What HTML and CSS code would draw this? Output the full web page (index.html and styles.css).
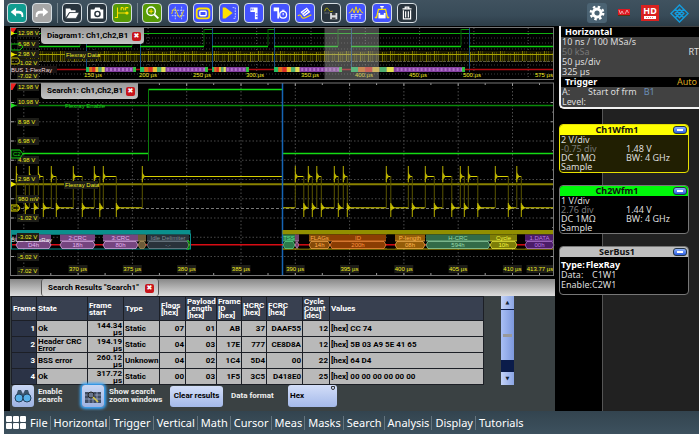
FILE: index.html
```html
<!DOCTYPE html>
<html lang="en">
<head>
<meta charset="utf-8">
<title>Oscilloscope</title>
<link rel="stylesheet" href="styles.css">
</head>
<body>
<div class="scope">
  <header class="toolbar">
    <div class="group">
      <button class="tool teal" aria-label="Undo"><svg viewBox="0 0 20 20"><path d="M9 4L3 9l6 5v-3.500h3q3 0 3 3v1h2v-2q0-5-5-5H9z" fill="#fff"/></svg></button>
      <button class="tool gray" aria-label="Redo"><svg viewBox="0 0 20 20"><path d="M11 4l6 5-6 5v-3.500H8q-3 0-3 3v1H3v-2q0-5 5-5h3z" fill="#fff"/></svg></button>
    </div>
    <span class="sep"></span>
    <div class="group">
      <button class="tool dark" aria-label="Open"><svg viewBox="0 0 20 20"><path d="M3 15V5h5l1 2h5v2H7z" fill="#fff"/><path d="M7.500 9.500H18L14.500 16H3.500z" fill="#fff" stroke="#29343d" stroke-width=".7"/></svg></button>
      <button class="tool dark" aria-label="Screenshot"><svg viewBox="0 0 20 20"><path d="M3 6h4l1-2h5l1 2h3v10H3z" fill="#fff"/><circle cx="10.500" cy="11" r="3.600" fill="#29343d"/><circle cx="10.500" cy="11" r="2" fill="#fff"/></svg></button>
      <button class="tool green" aria-label="Measure pulse"><svg viewBox="0 0 20 20" fill="none" stroke="#ffe000" stroke-width="1.200"><path d="M2 15h3V4M5 10h11M9 4v3M9 4h2M12 4v3M14 4v3M14 4h3"/><circle cx="15.500" cy="10" r="1.200" fill="#ffe000"/></svg></button>
    </div>
    <span class="sep"></span>
    <div class="group wide">
      <button class="tool green" aria-label="Zoom"><svg viewBox="0 0 20 20" fill="none"><circle cx="9" cy="8" r="4.700" stroke="#fff" stroke-width="1.600"/><path d="M12.500 11.500L17 16" stroke="#fff" stroke-width="2.200"/><path d="M6.500 8h5M9 5.500v5" stroke="#ffe000" stroke-width="1.200"/></svg></button>
      <button class="tool blue" aria-label="Cursor"><svg viewBox="0 0 20 20" fill="none"><path d="M7 3v14M14 3v14M3 7h14M3 13h14" stroke="#bcd0ff" stroke-dasharray="2 1"/><path d="M3 11C5 3 7 4 9 10s4 7 7-2" stroke="#ffe000"/></svg></button>
      <button class="tool blue" aria-label="Mask"><svg viewBox="0 0 20 20" fill="none"><rect x="3" y="5" width="14" height="11" rx="3" stroke="#ffe000" stroke-width="2"/><rect x="6.500" y="8" width="7" height="5" rx="1" stroke="#fff" stroke-width="1.500"/></svg></button>
      <button class="tool blue" aria-label="Search"><svg viewBox="0 0 20 20" fill="none"><path d="M3 4h3l8 6-8 6H3z" fill="#ffe000"/><path d="M14 4h3v12h-3" stroke="#cfd8ff" stroke-dasharray="2 1"/></svg></button>
      <button class="tool blue" aria-label="Ruler"><svg viewBox="0 0 20 20"><path d="M6 4h8v13h-3V9H6z" fill="#fff"/><path d="M7 5v2M9 5v2M12 11h2M12 14h2" stroke="#4453ff"/></svg></button>
      <button class="tool blue" aria-label="Timer"><svg viewBox="0 0 20 20"><path d="M3 4h6v12H7V8H3z" fill="#fff"/><circle cx="13.500" cy="12" r="3.800" fill="none" stroke="#fff" stroke-width="1.400"/><path d="M12 7h3M13.500 10v2.500" stroke="#fff" stroke-width="1.200"/></svg></button>
      <button class="tool blue" aria-label="Signal"><svg viewBox="0 0 20 20" fill="none"><path d="M5 9l7-5 4 5-7 5z" fill="#fff"/><path d="M7 10l5-4M8.500 12l5-4" stroke="#4453ff"/><path d="M2 13q3-2 4 1t5 1 6-3" stroke="#ffe000" stroke-width="1.300"/></svg></button>
      <button class="tool dark" aria-label="Save waveform"><svg viewBox="0 0 20 20" fill="none"><path d="M3 8q2-6 4-2t5 2" stroke="#b9b000"/><path d="M3 10h5" stroke="#aaa" stroke-dasharray="1 1"/><path d="M9 10h8v7H9z" fill="#ddd"/><path d="M11 10h4v2.500h-4zM11 15h4v2h-4z" fill="#444"/></svg></button>
      <button class="tool blue" aria-label="FFT"><svg viewBox="0 0 20 20"><path d="M2 10l2-1 2-4 2 5 2-7 2 7 2-5 2 4 2 1" fill="none" stroke="#ffe000"/><text x="10" y="17" class="fft">FFT</text></svg></button>
      <button class="tool blue" aria-label="Mask test"><svg viewBox="0 0 20 20" fill="none"><path d="M8 3h4M10 3v3" stroke="#fff" stroke-width="1.300"/><path d="M2 15h2l2-9h8l2 9h2" stroke="#ffe000" stroke-width="1.400"/><path d="M6 10h8v6H6z" fill="#fff"/><path d="M8 10h4v2H8z" fill="#4453ff"/></svg></button>
      <button class="tool dark" aria-label="Delete"><svg viewBox="0 0 20 20" fill="none" stroke="#fff" stroke-width="1.300"><path d="M5 5.500h10M8 5V3.500h4V5M6 7v9.500h8V7M8.500 8v7M11.500 8v7"/></svg></button>
    </div>
    <div class="status">
      <button class="gear" aria-label="Settings"><svg viewBox="0 0 20 20" fill="none" stroke="#fff"><circle cx="10" cy="10" r="4" stroke-width="2.800"/><circle cx="10" cy="10" r="6.200" stroke-width="2.400" stroke-dasharray="2.430 2.440"/></svg></button>
      <svg class="flag" viewBox="0 0 12 8"><path d="M0 0h12v7H0z" fill="#e01822"/><path d="M1 1l1.500 4L4 2l1.500 3M7 5l2-4 1.500 3" fill="none" stroke="#f4c0c0" stroke-width=".8"/><path d="M0 6.500h12" stroke="#531" /></svg>
      <svg class="hd" viewBox="0 0 18 16"><path d="M0 0h18v16H0z" fill="#d92220"/><text x="9" y="9" class="hd-text">HD</text><path d="M3 11h12v3H3z" fill="#fff"/><path d="M5 12.500h8" stroke="#e77" stroke-dasharray="1 1"/></svg>
      <svg class="logo" viewBox="0 0 20 20" fill="none" stroke="#149bdc" stroke-width="1.500"><path d="M10 1l9 9-9 9-9-9zM5.500 5.500l9 9M14.500 5.500l-9 9M10 5.500L14.500 10 10 14.500 5.500 10z"/></svg>
    </div>
  </header>

  <main class="work">
    <section class="left">
      <div class="plot">
        <svg id="overview" class="canvas" viewBox="10 27 545 53"></svg>
        <div class="tab"><span>Diagram1: Ch1,Ch2,B1</span><button class="close" aria-label="Close Diagram1">✖</button></div>
      </div>
      <div class="plot">
        <svg id="detail" class="canvas" viewBox="10 82 545 195"></svg>
        <div class="tab narrow"><span>Search1: Ch1,Ch2,B1</span><button class="close" aria-label="Close Search1">✖</button></div>
      </div>
      <div class="results">
        <div class="results-head">
          <div class="results-tab"><span>Search Results "Search1"</span><button class="close" aria-label="Close results">✖</button></div>
        </div>
        <div class="results-body">
          <table class="frames">
            <colgroup><col class="w25"><col class="w51"><col class="w36"><col class="w36"><col class="w26"><col class="w31"><col class="w25"><col class="w25"><col class="w36"><col class="w27"><col></colgroup>
            <thead><tr><th>Frame</th><th>State</th><th>Frame<br>start</th><th>Type</th><th>Flags<br>[hex]</th><th>Payload<br>Length<br>[hex]</th><th>Frame<br>ID<br>[hex]</th><th>HCRC<br>[hex]</th><th>FCRC<br>[hex]</th><th>Cycle<br>Count<br>[dec]</th><th>Values</th></tr></thead>
            <tbody>
              <tr><th>1</th><td>Ok</td><td class="num">144.34<br>µs</td><td>Static</td><td class="num">07</td><td class="num">01</td><td class="num">AB</td><td class="num">37</td><td class="num">DAAF55</td><td class="num">12</td><td>[hex] CC 74</td></tr>
              <tr><th>2</th><td>Header CRC<br>Error</td><td class="num">194.19<br>µs</td><td>Static</td><td class="num">04</td><td class="num">03</td><td class="num">17E</td><td class="num">777</td><td class="num">CE8D8A</td><td class="num">12</td><td>[hex] 5B 03 A9 5E 41 65</td></tr>
              <tr><th>3</th><td>BSS error</td><td class="num">260.12<br>µs</td><td>Unknown</td><td class="num">04</td><td class="num">02</td><td class="num">1C4</td><td class="num">5D4</td><td class="num">00</td><td class="num">22</td><td>[hex] 64 D4</td></tr>
              <tr><th>4</th><td>Ok</td><td class="num">317.72<br>µs</td><td>Static</td><td class="num">00</td><td class="num">03</td><td class="num">1F5</td><td class="num">3C5</td><td class="num">D418E0</td><td class="num">25</td><td>[hex] 00 00 00 00 00 00</td></tr>
            </tbody>
          </table>
          <div class="scrollbar">
            <button aria-label="Scroll up">▲</button>
            <span class="thumb"></span>
            <button aria-label="Scroll down">▼</button>
          </div>
        </div>
        <div class="controls">
          <button class="square" aria-labelledby="enable-l"><svg viewBox="0 0 22 22"><path d="M3 14L6 5h3l2 4 2-4h3l3 9z" fill="#3b556c"/><circle cx="7" cy="13" r="4" fill="#57b0e8" stroke="#23405c"/><circle cx="15" cy="13" r="4" fill="#57b0e8" stroke="#23405c"/></svg></button>
          <span class="caption" id="enable-l">Enable<br>search</span>
          <button class="square active" aria-labelledby="show-l"><svg viewBox="0 0 22 22"><path d="M3 7h16v11H3z" fill="#3f4c63"/><path d="M3 10h16M3 14h16M7 7v11M11 7v11M15 7v11" stroke="#a9b6d2" stroke-width=".7"/><circle cx="9" cy="10" r="3" fill="#69758c" stroke="#222"/><path d="M11 12l5 5" stroke="#d8c848" stroke-width="1.600"/></svg></button>
          <span class="caption zoomcap" id="show-l">Show search<br>zoom windows</span>
          <button class="clear">Clear results</button>
          <label class="caption" for="format">Data format</label>
          <div class="picker"><select id="format"><option>Hex</option></select><i class="arrow"></i></div>
        </div>
      </div>
    </section>

    <aside class="side">
      <section class="setup">
        <h2>Horizontal</h2>
        <div class="lines">
          <p>10 ns / 100 MSa/s</p>
          <p class="split"><span class="dim">50 kSa</span><span>RT</span></p>
          <p>50 µs/div</p>
          <p>325 µs</p>
        </div>
        <h2 class="split">Trigger <span class="auto">Auto</span></h2>
        <div class="lines">
          <p class="trig"><span>A:</span><span>Start of frm</span><span class="src">B1</span></p>
          <p>Level:</p>
        </div>
      </section>
      <section class="card ch1">
        <h3>Ch1Wfm1<button class="min" aria-label="Minimize Ch1Wfm1"></button></h3>
        <dl><dt>2 V/div</dt><dd></dd><dt class="dim">-0.75 div</dt><dd>1.48 V</dd><dt>DC 1MΩ</dt><dd>BW: 4 GHz</dd><dt>Sample</dt><dd></dd></dl>
      </section>
      <section class="card ch2">
        <h3>Ch2Wfm1<button class="min" aria-label="Minimize Ch2Wfm1"></button></h3>
        <dl><dt>1 V/div</dt><dd></dd><dt class="dim">2.76 div</dt><dd>1.44 V</dd><dt>DC 1MΩ</dt><dd>BW: 4 GHz</dd><dt>Sample</dt><dd></dd></dl>
      </section>
      <section class="card bus">
        <h3>SerBus1<button class="min" aria-label="Minimize SerBus1"></button></h3>
        <p class="type">Type:&#8202;FlexRay</p>
        <dl><dt>Data:</dt><dd>C1W1</dd><dt>Enable:</dt><dd>C2W1</dd></dl>
      </section>
    </aside>
  </main>

  <nav class="menu">
    <button class="apps" aria-label="All menus"><i></i><i></i><i></i><i></i><i></i><i></i></button>
    <a href="#">File</a><a href="#">Horizontal</a><a href="#">Trigger</a><a href="#">Vertical</a><a href="#">Math</a><a href="#">Cursor</a><a href="#">Meas</a><a href="#">Masks</a><a href="#">Search</a><a href="#">Analysis</a><a href="#">Display</a><a href="#">Tutorials</a>
  </nav>
</div>
<script src="plots.js"></script>
</body>
</html>
```
FILE: styles.css
```css
* { box-sizing: border-box; }
body { margin: 0; background: #fff; font-family: "Noto Sans", sans-serif; font-size: 9px; line-height: 10px; color: #ddd; }
h2, h3, p, dl, dd { margin: 0; }
button, select { font: inherit; padding: 0; border: 0; }
svg { display: block; }
.scope { margin: 0 1px 1px 4px; min-height: 434px; background: #000; display: flex; flex-direction: column; }

.toolbar { display: flex; align-items: center; height: 26px; padding-left: 3px; background: linear-gradient(#40525f, #384b58 60%, #2c3c47); }
.group { display: flex; gap: 5px; }
.group.wide { flex: 0 0 275px; gap: 0; justify-content: space-between; }
.sep { width: 1px; height: 20px; margin: 0 4px 0 5px; background: #76848d; }
.tool { width: 20px; height: 20px; border: 1px solid #d5dde2; border-radius: 4px; }
.tool svg { width: 18px; height: 18px; }
.teal { background: #109c90; }
.gray { background: #a6a6a6; }
.dark { background: #29343d; }
.green { background: #579a06; }
.blue { background: #4453ff; }
.fft { font: 7px "Liberation Sans", sans-serif; fill: #fff; text-anchor: middle; }
.status { display: flex; align-items: center; gap: 11px; margin-left: auto; padding-right: 10px; }
.gear { width: 20px; height: 20px; border-radius: 3px; background: #4b6373; }
.gear svg { width: 20px; height: 20px; }
.flag { width: 12px; height: 8px; }
.hd { width: 18px; height: 16px; }
.hd-text { font: bold 9px "Noto Sans", sans-serif; fill: #fff; text-anchor: middle; }
.logo { width: 19px; height: 19px; }

.work { display: flex; flex: 1; gap: 4px; padding-left: 6px; }
.left { flex: 1; min-width: 0; display: flex; flex-direction: column; gap: 2px; padding-top: 1px; }
.plot { position: relative; }
.canvas { width: 100%; height: auto; }
.canvas text { font: 6px "Liberation Sans", sans-serif; }
.tab { position: absolute; left: 31px; top: 1px; width: 103px; height: 16px; padding: 0 3px 0 6px; display: flex; align-items: center; justify-content: space-between; border-radius: 0 0 4px 4px; background: linear-gradient(#999, #c4c4c4); color: #000; font: bold 8px/10px Roboto, sans-serif; white-space: nowrap; }
.tab.narrow { width: 97px; }
.close { flex: none; width: 9px; height: 9px; border-radius: 2px; background: #c8151b; color: #fff; font: 7px/9px "DejaVu Sans", sans-serif; text-align: center; }

.results { flex: 1; display: flex; flex-direction: column; background: #3a4143; font-family: Roboto, sans-serif; }
.results-head { height: 17px; padding-left: 31px; background: linear-gradient(#888, #ddd); }
.results-tab { display: flex; align-items: center; justify-content: space-between; width: 118px; height: 17px; padding: 1px 4px 0 6px; border: solid #555; border-width: 0 1px; border-radius: 3px; background: linear-gradient(#aaa, #e0e0e0); color: #000; font-size: 8px; font-weight: bold; white-space: nowrap; }
.results-body { display: flex; justify-content: space-between; padding: 0 41px 0 1px; }
.frames { width: 473px; table-layout: fixed; border-collapse: collapse; border-bottom: 1px solid #1a4a9a; font-size: 8px; font-weight: bold; color: #000; }
.w25 { width: 25px; } .w26 { width: 26px; } .w27 { width: 27px; } .w31 { width: 31px; } .w36 { width: 36px; } .w51 { width: 51px; }
.frames th, .frames td { height: 16px; padding: 0 1px; border: 1px solid #1c1f26; text-align: left; white-space: nowrap; line-height: 7px; }
.frames td { background: #b9b9b9; }
.frames th { background: #384050; color: #fff; height: 24px; }
.frames tbody th { height: 16px; text-align: right; background: #2b3346; }
.frames td.num { text-align: right; }
.scrollbar { display: flex; flex-direction: column; width: 13px; background: #0b1c4a; }
.scrollbar button { height: 13px; background: linear-gradient(90deg, #c4d3f8, #8ba5e4); color: #123; font: 5px/13px "DejaVu Sans", sans-serif; text-align: center; }
.thumb { flex: 1; margin: 1px 0 12px; background: linear-gradient(#999, #999) center / 9px 3px no-repeat, linear-gradient(90deg, #a9bff5, #7d98dc); }
.controls { display: flex; align-items: center; flex: 1; padding: 0 0 4px 2px; font-size: 8px; line-height: 8px; font-weight: bold; color: #eee; }
.square { width: 22px; height: 22px; border-radius: 3px; background: linear-gradient(#c9d7f4, #9db2e2); }
.square svg { width: 22px; height: 22px; }
.square.active { margin-left: 16px; box-shadow: 0 0 3px 2px #3aa8ff; }
.caption { width: 28px; margin-left: 4px; white-space: nowrap; }
.caption.zoomcap { width: 54px; margin-left: 5px; }
.clear { width: 53px; height: 21px; margin: 0 8px 0 7px; border-radius: 3px; background: linear-gradient(#d3def8, #a4b9ea); color: #000; font-weight: bold; white-space: nowrap; }
label.caption { width: 52px; margin-left: 0; }
.picker { position: relative; margin-left: 5px; }
.picker select { appearance: none; width: 49px; height: 22px; padding-left: 2px; border-radius: 3px; background: linear-gradient(#d3def8, #a4b9ea); color: #000; font-weight: bold; }
.arrow { position: absolute; right: 2px; top: 1px; width: 4px; height: 4px; border: 1px solid #333; border-radius: 0 0 3px 3px; }

.side { flex: 0 0 140px; padding-bottom: 8px; background: linear-gradient(90deg, #000 43px, #555 43px, #555 44px, #212121 44px); }
.setup { height: 83px; border: solid #f2f2f2; border-width: 0 0 2px 2px; border-radius: 0 0 0 5px; background: #414141; overflow: hidden; }
.setup h2 { height: 10px; padding: 0 2px 0 4px; background: #000; color: #fff; font-size: 9px; line-height: 10px; }
.setup h2:first-child { margin-top: 1px; }
.setup .lines { padding: 0 0 0 1px; }
.split { display: flex; justify-content: space-between; }
.setup .auto { color: #d9a520; font-weight: normal; }
.dim { color: #777; }
.trig { display: flex; }
.trig span:first-child { width: 26px; }
.trig .src { margin-left: 7px; color: #6b8fb8; }
.card { margin: 0 10px 12px 0; height: 49px; border: 1px solid #777; border-radius: 4px; background: #000; overflow: hidden; }
.setup + .card { margin-top: 15px; }
.card h3 { position: relative; height: 10px; padding-right: 14px; text-align: center; color: #111; font-size: 9px; line-height: 10px; }
.card dl { display: grid; grid-template-columns: 65px 1fr; grid-auto-rows: 9px; line-height: 9px; padding-left: 1px; }
.ch1 { border-color: #e6e000; background: #211f02; }
.ch1 h3 { background: #ff0; }
.ch2 h3 { background: #00f80a; }
.bus h3 { background: #bebebe; }
.bus dl { grid-template-columns: 31px 1fr; grid-auto-rows: 10px; }
.bus dt { white-space: nowrap; }
.type { padding: 3px 0 0 1px; font-weight: bold; color: #fff; }
.min { position: absolute; right: 1px; top: 1px; width: 14px; height: 8px; border: 1px solid #234; border-radius: 3px; background: linear-gradient(#fff, #fff) center / 6px 2px no-repeat, linear-gradient(#8fb4ff, #2a5ce0); }

.menu { display: flex; align-items: center; height: 23px; padding-left: 2px; background: linear-gradient(#33444f, #3d515e); }
.apps { display: grid; grid-template-columns: repeat(3, 6px); gap: 1px; margin-right: 1px; background: none; }
.apps i { height: 6px; background: #fff; border-radius: 1px; }
.menu a { padding: 0 2px 0 3px; border-right: 1px solid #64747e; color: #fff; font-size: 11px; line-height: 14px; text-decoration: none; }
.menu a:last-child { border: 0; }
```
FILE: plots.js
```js
const NS = 'http://www.w3.org/2000/svg';

function add(svg, name, attrs, text) {
  const node = document.createElementNS(NS, name);
  for (const key in attrs) node.setAttribute(key, attrs[key]);
  if (text) node.textContent = text;
  svg.appendChild(node);
}
const line = (svg, x1, y1, x2, y2, stroke, w = 1, dash = '') =>
  add(svg, 'line', { x1, y1, x2, y2, stroke, 'stroke-width': w, 'stroke-dasharray': dash });
const rect = (svg, x, y, width, height, fill, extra = {}) =>
  add(svg, 'rect', { x, y, width, height, fill, ...extra });
const label = (svg, x, y, text, fill = '#f0ec20', anchor = 'start') =>
  add(svg, 'text', { x, y, fill, 'text-anchor': anchor }, text);
function boxed(svg, x, y, text, width, centered) {
  rect(svg, centered ? x - width / 2 : x, y - 6, width, 8, '#1d1d18');
  label(svg, centered ? x : x + 1, y, text, '#f0ec20', centered ? 'middle' : 'start');
}

// Overview diagram
const ov = document.getElementById('overview');
rect(ov, 10, 27, 545, 53, '#000');
for (let i = 0; i < 10; i++) {
  const x = 39.5 + i * 54.3;
  line(ov, x, 28, x, 79, '#555', 1, '1 2');
}
[38, 43, 49, 60, 65, 74].forEach(y => line(ov, 11, y, 554, y, '#3d3d3d', 1, '1 2'));
rect(ov, 11, 51, 543, 10, '#1c1a00');
for (let x = 26; x < 553; x += 2) {
  const k = (x * 37) % 11;
  if (k > 2) line(ov, x + 0.5, 51 + k % 3, x + 0.5, 62 - k % 2, k > 8 ? '#787200' : '#454200');
}
line(ov, 11, 54.5, 554, 54.5, '#aaa400');
line(ov, 11, 61.5, 554, 61.5, '#5b5940', 1, '3 1');
line(ov, 11, 33.5, 554, 33.5, '#10b010');
let from = 22;
[[80, 86], [132, 140], [204, 212], [268, 274], [338, 351], [461, 469]].forEach(([a, b]) => {
  line(ov, from, 46.5, a, 46.5, '#10d010', 1.5);
  line(ov, a, 29.5, b, 29.5, '#0b8a0b');
  line(ov, a, 29, a, 46, '#075a07');
  line(ov, b + 0.5, 28, b + 0.5, 72, '#134a80');
  from = b;
});
line(ov, from, 46.5, 554, 46.5, '#10d010', 1.5);
line(ov, 12, 69.5, 554, 69.5, '#b00c12', 1.5);
[[86, 136], [140, 208], [212, 249], [274, 342], [351, 465]].forEach(([a, b]) => {
  rect(ov, a, 67, b - a, 5, '#8440a0');
  const cols = ['#25c060', '#e07018', '#e03020', '#e8c030', '#50b070', '#e0e050'];
  cols.forEach((c, i) => rect(ov, a + i * (b - a) / 16, 67, (b - a) / 16, 5, c));
  for (let x = a + (b - a) * 0.4; x < b - 4; x += 4) rect(ov, x, 68, 2, 3, '#b070c8');
  rect(ov, b - 3, 67, 3, 5, '#30c040');
});
[['150 µs', 93], ['200 µs', 148], ['250 µs', 202], ['300 µs', 255], ['350 µs', 310],
 ['400 µs', 364], ['450 µs', 418], ['500 µs', 472], ['575 µs', 544]].forEach(([t, x]) => label(ov, x, 77, t, '#f0ec20', 'middle'));
[['12.98 V', 35], ['6.98 V', 46], ['2.98 V', 56], ['-1.02 V', 65], ['-7.02 V', 78]].forEach(([t, y]) => boxed(ov, 17, y, t, 22));
boxed(ov, 65, 57, 'Flexray Data', 33);
rect(ov, 11, 66, 46, 7, '#1a1212');
label(ov, 11, 72, 'BUS 1:FlexRay', '#f0d8d8');
add(ov, 'path', { d: 'M10.500 28h6l-4 6h-2z', fill: '#f02020' });
add(ov, 'path', { d: 'M11 52l5 2.500-5 2.500zM11 31l4 2.500-4 2z', fill: '#f0e800' });
add(ov, 'path', { d: 'M11 44h9l3 3-3 3h-9z', fill: 'none', stroke: '#10c010' });
add(ov, 'path', { d: 'M11 58h7l2 3-2 3h-7z', fill: 'none', stroke: '#c0b800' });
rect(ov, 324.5, 28, 54.5, 51, '#aaa', { opacity: 0.42 });
rect(ov, 10.5, 27.5, 543, 52, 'none', { stroke: '#777' });

// Zoomed search diagram
const dt = document.getElementById('detail');
rect(dt, 10, 82, 545, 195, '#000');
for (let i = 0; i < 10; i++) {
  const x = 23.8 + i * 54.3;
  line(dt, x, 84, x, 275, '#4e4e4e', 1, '1.500 2');
  line(dt, x, 83, x, 86, '#999');
  line(dt, x + 27, 83, x + 27, 85, '#999');
  line(dt, x, 272, x, 275, '#999');
  line(dt, x + 27, 273, x + 27, 275, '#999');
}
for (let i = 0; i < 9; i++) {
  const y = 102.5 + i * 19.25;
  line(dt, 11, y, 554, y, '#484848', 1, '1.500 2');
  line(dt, 11, y, 14, y, '#999');
  line(dt, 551, y, 554, y, '#999');
  line(dt, 552, y + 9.6, 554, y + 9.6, '#777');
}
line(dt, 11, 208.5, 553, 208.5, '#777', 1, '3 2');
line(dt, 11, 105.5, 553, 105.5, '#0a8a0a', 1.5);
line(dt, 11, 184.2, 553, 184.2, '#8a8200', 2);
line(dt, 23, 153.4, 148.5, 153.4, '#14dc14', 1.5);
line(dt, 148.5, 89.4, 282, 89.4, '#14dc14', 1.5);
line(dt, 283, 153.4, 553, 153.4, '#14dc14', 1.5);
line(dt, 148.5, 89, 148.5, 161, '#0a7a0a');

const pulses = [[16, 25], [29, 34], [38, 43], [51, 56], [73, 82], [94, 99.5], [103, 116], [142, 282],
  [295, 303.5], [308, 312], [316.5, 321], [334, 338], [343, 347], [386, 390.5], [408, 412], [425, 434],
  [442.5, 451.5], [460, 464], [468, 477.5], [495, 508], [516.5, 521]];
let low = 12;
pulses.forEach(([a, b]) => {
  line(dt, low, 207.8, a, 207.8, '#d8d000');
  line(dt, a, 176.5, b, 176.5, '#d8d000');
  line(dt, a + 0.3, 176, a + 0.3, 208, '#5a5600');
  line(dt, a + 0.3, 166, a + 0.3, 182, '#b8b000');
  if (b !== 282) {
    line(dt, b + 0.3, 176, b + 0.3, 208, '#5a5600');
    line(dt, b + 0.3, 203, b + 0.3, 217, '#b8b000');
    add(dt, 'path', { d: `M${b} 203l4 5-4 3z`, fill: '#b8b000' });
  }
  add(dt, 'path', { d: `M${a} 172l3 4.500-3 4z`, fill: '#b8b000' });
  low = b;
});
line(dt, 282.5, 83, 282.5, 275, '#1664b4', 1.5);
line(dt, 521, 207.8, 553, 207.8, '#d8d000');

line(dt, 12, 244.8, 553, 244.8, '#d80c14', 1.5);
rect(dt, 11, 230, 179.5, 4.5, '#0a8f8c');
rect(dt, 11.5, 234, 179, 15, 'none', { stroke: '#0a8f8c' });
rect(dt, 282.5, 230, 271, 4.5, '#918e00');
line(dt, 282.5, 249, 553, 249, '#c8b400');
[[16, 51, '#75457f', '#e4b4f0', '', 'D4h'], [60, 95, '#75457f', '#e4b4f0', '2:CRC', '18h'],
 [103, 138, '#75457f', '#e4b4f0', '3:CRC', '80h'], [138, 146, '#6b5b38', '#b39a60', '', ''],
 [147, 189, '#29323a', '#7d8d98', 'Idle Delimiter', '-.-'],
 [283, 295, '#2b7a4c', '#5fe08e', 'TSS', ''], [295, 299, '#72446c', '#d090c8', '', ''],
 [309, 330, '#854a08', '#ffac4c', 'FLAGs', '14h'], [330, 386, '#8b3d03', '#ff9440', 'ID', '200h'],
 [395, 425, '#945c08', '#ffb850', 'P-length', '08h'], [426, 490, '#326b48', '#98dcac', 'H-CRC', '594h'],
 [490, 517, '#7d7d08', '#f8f840', 'Cycle', '10h'], [525, 554, '#4b1b68', '#bc7ce0', '1.DATA', '00h']]
  .forEach(([a, b, fill, edge, name, value]) => {
    rect(dt, a, 234.500, b - a, 6.500, fill);
    line(dt, a, 241, b, 241, edge, 0.7);
    add(dt, 'path', { d: `M${a + 2} 241.500H${b - 2}L${b} 245l-2 3.500H${a + 2}L${a} 245z`, fill, stroke: edge, 'stroke-width': 0.7 });
    if (name) label(dt, (a + b) / 2, 240, name, edge, 'middle');
    if (value) label(dt, (a + b) / 2, 247, value, edge, 'middle');
  });
add(dt, 'path', { d: 'M187 241h2v8h-2', fill: 'none', stroke: '#20e020' });
[[299, 309], [387, 395], [517, 525]].forEach(([a, b]) => {
  rect(dt, a, 234.5, b - a, 14, '#050000');
  line(dt, a, 244.8, b, 244.8, '#d80c14', 1.5);
});
label(dt, 11, 242, 'BUS 1:FlexRay', '#e8e8e8');

['12.98 V', '10.98 V', '8.98 V', '6.98 V', '4.98 V', '2.98 V', '980 mV', '-1.02 V', '-3.02 V', '-5.02 V', '-7.02 V']
  .forEach((t, i) => boxed(dt, 17, [89, 104, 124, 143, 162, 181, 201, 220, 239, 259, 273][i], t, 22));
['370 µs', '375 µs', '380 µs', '385 µs', '390 µs', '395 µs', '400 µs', '405 µs', '410 µs']
  .forEach((t, i) => boxed(dt, 78 + i * 54.3, 271, t, 19, true));
boxed(dt, 540, 271, '413.77 µs', 27, true);
label(dt, 65, 108, 'Flexray Enable', '#20d020');
boxed(dt, 64, 187, 'Flexray Data', 34);
add(dt, 'path', { d: 'M10.500 83h6l-4 7h-2z', fill: '#f02020' });
add(dt, 'path', { d: 'M11 103l5 2.500-5 2.500z', fill: '#20e020' });
add(dt, 'path', { d: 'M11 181.500l5 2.700-5 2.700z', fill: '#f0e800' });
add(dt, 'path', { d: 'M11 150h9l3 4-3 4h-9z', fill: '#001800', stroke: '#18d018' });
label(dt, 13, 156, 'C2', '#18d018');
add(dt, 'path', { d: 'M11 205h7l2 3-2 3h-7z', fill: '#181800', stroke: '#d8d000' });
label(dt, 12, 210, 'C1', '#d8d000');
rect(dt, 10.5, 83, 543, 192.5, 'none', { stroke: '#777' });
```
